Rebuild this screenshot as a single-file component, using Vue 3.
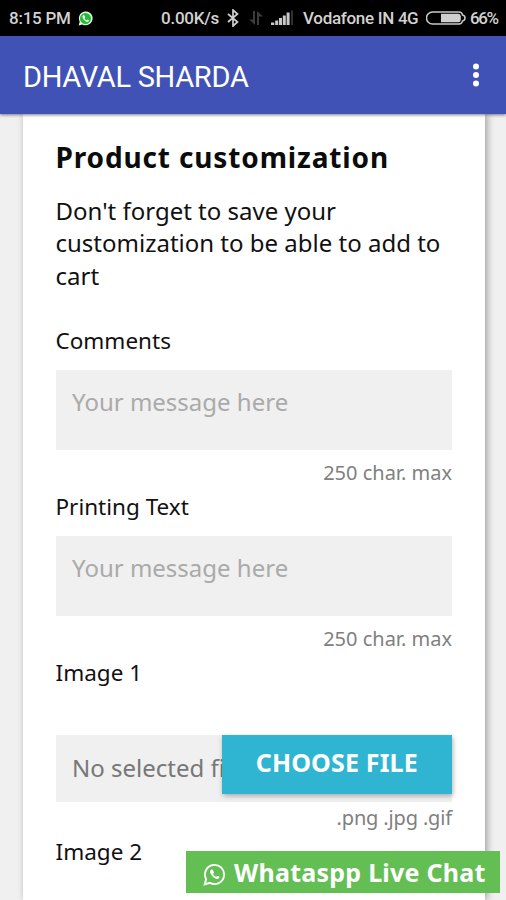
<script setup>
const fields = [
  { id: 'comments', label: 'Comments', placeholder: 'Your message here' },
  { id: 'printing', label: 'Printing Text', placeholder: 'Your message here' },
]
</script>

<template>
  <div class="screen">
    <div class="status">
      <span class="time">8:15 PM</span>
      <svg class="wa-small" viewBox="0 0 24 24">
        <path d="M1 23l1.700-6A11 11 0 1 1 7 21.400z" fill="#e4f5e4" />
        <circle cx="12" cy="12" r="8.800" fill="#20bd35" />
        <path d="M8.400 6.500c-2 1.200-1.600 4 .8 6.900s5.600 4.600 7.500 3.200c1.400-1.100 1-1.700-.8-2.500-1.200-.6-1.400.9-2 .7-1.300-.5-2.700-1.800-3.300-3.200 0-.5 1.200-.9.800-1.800-.7-1.900-1.200-3.600-3-3.300z" fill="#fff" />
      </svg>
      <span class="speed">0.00K/s</span>
      <svg class="bt" viewBox="0 0 14 18">
        <path d="M2 5l9.500 8L7 17V1l4.500 4L2 13" fill="none" stroke="#d0d0d0" stroke-width="1.700" />
      </svg>
      <svg class="arrows" viewBox="0 0 16 16">
        <path d="M5 1h2v14L1 9.500h4zM9 15V1l6 5.500h-4V15z" fill="#3b3b3b" />
      </svg>
      <svg class="signal" viewBox="0 0 23 16">
        <path d="M0 12.500h3.300V15H0zM4.200 10.500h3V15h-3zM8 8h3v7H8zM11.800 5.500h3V15h-3zM15.600 2.500h3V15h-3z" fill="#c9c9c9" />
        <path d="M20 .5h2V15h-2z" fill="#303030" />
      </svg>
      <span class="carrier">Vodafone IN</span>
      <span class="net">4G</span>
      <svg class="battery" viewBox="0 0 40 14">
        <path d="M6.500 1H33q3 0 3.500 3 2.500.5 2.500 3t-2.500 3q-.5 3-3.500 3H6.500a6 6 0 0 1 0-12z" fill="none" stroke="#c9c9c9" stroke-width="1.500" />
        <path d="M15 2.700h17.500q2 0 2.300 2.500v3.600q-.3 2.500-2.300 2.500H15z" fill="#cfcfcf" />
      </svg>
      <span class="percent">66%</span>
    </div>

    <header class="appbar">
      <span class="title">DHAVAL SHARDA</span>
      <svg class="more" viewBox="0 0 8 24">
        <circle cx="4" cy="3.500" r="3" /><circle cx="4" cy="12" r="3" /><circle cx="4" cy="20.500" r="3" />
      </svg>
    </header>

    <main class="page">
      <section class="card">
        <h1>Product customization</h1>
        <p class="intro">Don't forget to save your customization to be able to add to cart</p>
        <div v-for="f in fields" :key="f.id" class="field">
          <label>{{ f.label }}</label>
          <div class="box">{{ f.placeholder }}</div>
          <small>250 char. max</small>
        </div>
        <div class="field file">
          <label>Image 1</label>
          <div class="picker">
            <span class="filename">No selected file</span>
            <button>CHOOSE FILE</button>
          </div>
          <small class="types">.png .jpg .gif</small>
        </div>
        <div class="field image2"><label>Image 2</label></div>
      </section>
    </main>

    <div class="chat">
      <svg class="wa" viewBox="0 0 24 24">
        <path d="M1.800 22.200l1.500-5.400a10 10 0 1 1 3.900 3.900z" fill="none" stroke="#fff" stroke-width="2" />
        <path d="M8.700 6.800c-2 .9-1.700 3.500.5 6.200s5.200 4.400 7.100 3.200c1.500-1 1.100-1.800-.6-2.600-1.200-.6-1.500.9-2.100.7-1.200-.5-2.400-1.600-3-2.900 0-.5 1.100-.9.700-1.800-.6-1.600-.9-3.100-2.600-2.800z" fill="#fff" />
      </svg>
      <span>Whataspp Live Chat</span>
    </div>
  </div>
</template>

<style>
body { margin: 0; background: #f0f0f0; }
</style>

<style scoped>
.screen {
  position: relative;
  width: 506px;
  height: 900px;
  overflow: hidden;
  display: flex;
  flex-direction: column;
  background: #f0f0f0;
  font-family: "Noto Sans", sans-serif;
}
.status {
  height: 36px;
  flex: none;
  display: flex;
  align-items: center;
  box-sizing: border-box;
  padding-left: 9px;
  background: #000;
  color: #d2d2d2;
  font: 500 17px/36px Roboto, sans-serif;
  letter-spacing: -.25px;
  white-space: nowrap;
}
.status svg { flex: none; }
.time { width: 69px; }
.wa-small { width: 15px; height: 15px; }
.speed { margin-left: 68px; width: 65px; }
.bt { width: 14px; height: 18px; }
.arrows { width: 16px; height: 16px; margin-left: 8px; }
.signal { width: 23px; height: 16px; margin-left: 7px; }
.carrier { margin-left: 9px; width: 95px; letter-spacing: -.3px; }
.net { width: 28px; letter-spacing: -.6px; }
.battery { width: 40px; height: 14px; }
.percent { margin-left: 4px; letter-spacing: -1.400px; }
.appbar {
  position: relative;
  z-index: 1;
  height: 78px;
  flex: none;
  display: flex;
  align-items: center;
  justify-content: space-between;
  box-sizing: border-box;
  padding: 3px 26px 0 23px;
  background: #4052b5;
  color: #fff;
  box-shadow: 0 1px 3px rgba(0, 0, 0, .5);
}
.title { font: 400 29px/40px Roboto, sans-serif; letter-spacing: -.3px; }
.more { width: 8px; height: 24px; fill: #fff; margin-top: -3px; }
.page { flex: 1; min-height: 0; padding: 0 21px 0 23px; }
.card {
  height: 786px;
  box-sizing: border-box;
  padding: 24px 33px 0 32.500px;
  background: #fff;
  box-shadow: 2px 0 7px rgba(0, 0, 0, .35);
}
h1 { margin: 0; font-size: 28px; line-height: 38px; font-weight: 700; letter-spacing: .86px; color: #0b0b0b; white-space: nowrap; }
.intro { margin: 19px -10px 0 0; font-size: 24px; line-height: 32.300px; color: #111; }
.field { display: flex; flex-direction: column; height: 166px; }
.intro + .field { margin-top: 32px; }
label { font-size: 22.500px; line-height: 34px; height: 46.500px; flex: none; color: #111; }
.box {
  height: 79.500px;
  box-sizing: border-box;
  padding: 15px 16.500px;
  background: #f0f0f0;
  color: #aaa;
  font-size: 24px;
  line-height: 34px;
}
small { align-self: flex-end; margin-top: 8px; font-size: 20px; line-height: 30px; color: #808080; white-space: nowrap; }
.file { height: 179px; }
.file label { height: 79px; }
.picker { display: flex; height: 67px; background: #f0f0f0; }
.filename {
  width: 166px;
  flex: none;
  box-sizing: border-box;
  padding-left: 16.500px;
  overflow: hidden;
  white-space: nowrap;
  font-size: 24px;
  line-height: 66px;
  color: #777;
}
button {
  margin: 0;
  width: 230.500px;
  height: 59px;
  flex: none;
  border: 0;
  padding: 0 0 4px;
  background: #2fb5d2;
  color: #fff;
  font: 700 25px/55px "Noto Sans", sans-serif;
  letter-spacing: .15px;
  box-shadow: 1px 2px 5px rgba(0, 0, 0, .3);
}
.types { margin-top: 1px; letter-spacing: -.15px; }
.chat {
  position: absolute;
  left: 186px;
  top: 851px;
  width: 314px;
  height: 42px;
  display: flex;
  align-items: center;
  box-sizing: border-box;
  padding-left: 17px;
  background: #63be54;
  color: #fff;
  font-size: 25px;
  line-height: 42px;
  font-weight: 700;
  letter-spacing: .25px;
  white-space: nowrap;
}
.wa { width: 23px; height: 23px; flex: none; margin: 4px 8px 0 0; }
</style>
